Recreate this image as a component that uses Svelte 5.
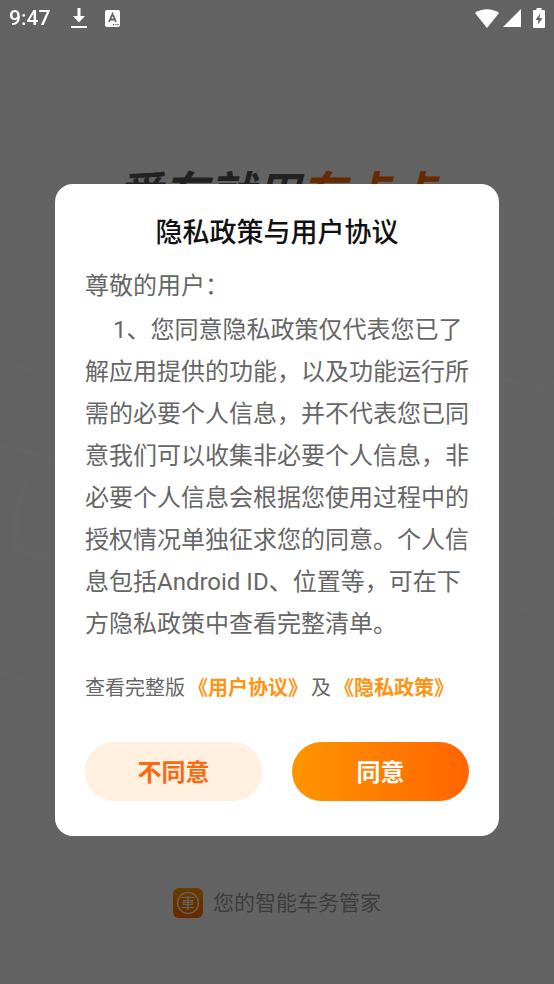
<script>
    // Splash screen with the privacy consent dialog on top of it.

    let answer = $state(null);

    const slogan = { lead: '爱车就用', brand: '车卡卡' };

    const greeting = '尊敬的用户：';
    const terms =
        '1、您同意隐私政策仅代表您已了解应用提供的功能，以及功能运行所需的必要个人信息，' +
        '并不代表您已同意我们可以收集非必要个人信息，非必要个人信息会根据您使用过程中的' +
        '授权情况单独征求您的同意。个人信息包括Android ID、位置等，可在下方隐私政策中查看完整清单。';
</script>

<div class="splash">
    <!-- faint street lines -->
    <svg class="streets" viewBox="0 0 554 984" preserveAspectRatio="none" aria-hidden="true">
        <path d="M0 362L60 377M0 445L60 460M0 672L60 690" />
        <path d="M30 466L16 515L15 548L60 563" stroke-width="4" />
        <path d="M494 415L554 382M494 376L538 388M494 478L554 514M494 530L525 515M494 596L554 622" />
    </svg>

    <h1 class="slogan">{slogan.lead}<span>{slogan.brand}</span></h1>

    <div class="footer">
        <svg class="logo" viewBox="0 0 30 30" aria-hidden="true">
            <defs>
                <linearGradient id="logo-fill" x1="0" y1="0" x2="0" y2="1">
                    <stop offset="0" stop-color="#ff9800" />
                    <stop offset="1" stop-color="#ff6a00" />
                </linearGradient>
            </defs>
            <rect width="30" height="30" rx="6" fill="url(#logo-fill)" />
            <circle cx="15" cy="15" r="10.5" fill="none" stroke="#fff" stroke-width="1.2" />
            <text x="15" y="20" text-anchor="middle">車</text>
        </svg>
        <span>您的智能车务管家</span>
    </div>
</div>

<div class="mask">
    <div class="status-bar">
        <span class="time">9:47</span>
        <svg width="16" height="20" viewBox="0 0 16 20" aria-hidden="true">
            <path d="M6.5 0h3v8H14l-6 6.500L2 8h4.500zM0 18h16v2H0z" fill="#fff" />
        </svg>
        <svg class="lang" width="15" height="17" viewBox="0 0 15 17" aria-hidden="true">
            <rect width="15" height="17" rx="2" fill="#fff" />
            <path d="M4 12L7.500 4L11 12M5.200 9.500h4.600" fill="none" stroke="#636363" stroke-width="1.800" />
            <path d="M8 14h1.300v1.300H8zM10.300 14h1.300v1.300h-1.300zM12.500 14h1.300v1.300h-1.300z" fill="#636363" />
        </svg>
        <svg class="wifi" width="24" height="19" viewBox="0 0 24 19" aria-hidden="true">
            <path d="M0 4C7-1 17-1 24 4L12 19z" fill="#fff" />
        </svg>
        <svg width="18" height="18" viewBox="0 0 18 18" aria-hidden="true">
            <path d="M18 0v18H0z" fill="#fff" />
        </svg>
        <svg class="battery" width="12" height="20" viewBox="0 0 12 20" aria-hidden="true">
            <path d="M3.500 0h5v2H11q1 0 1 1v16q0 1-1 1H1q-1 0-1-1V3q0-1 1-1h2.500z" fill="#fff" />
            <path d="M7.500 5L2.500 12H5.500L4.500 17L9.500 10H6.500z" fill="#636363" />
        </svg>
    </div>

    {#if answer === null}
        <div class="dialog" role="dialog" aria-modal="true" aria-labelledby="dialog-title">
            <h2 id="dialog-title">隐私政策与用户协议</h2>
            <div class="content">
                <p>{greeting}</p>
                <p class="terms">{terms}</p>
            </div>
            <p class="links">查看完整版<a href="#agreement">《用户协议》</a>及<a href="#privacy">《隐私政策》</a></p>
            <div class="actions">
                <button class="refuse" onclick={() => (answer = 'no')}>不同意</button>
                <button class="agree" onclick={() => (answer = 'yes')}>同意</button>
            </div>
        </div>
    {/if}
</div>

<style>
    :global(body) {
        margin: 0;
        background: #f8f8f8;
        font-family: Roboto, "Noto Sans CJK SC", sans-serif;
    }

    h1,
    h2,
    p {
        margin: 0;
    }

    .splash {
        position: relative;
        box-sizing: border-box;
        min-height: 100vh;
        padding: 168px 20px 66px;
        display: flex;
        flex-direction: column;
        align-items: center;
        justify-content: space-between;
    }

    .streets {
        position: absolute;
        inset: 0;
        width: 100%;
        height: 100%;
        fill: none;
        stroke: #f8fbfa;
        stroke-width: 3;
    }

    .slogan {
        color: #555;
        font-size: 46px;
        font-style: italic;
        font-weight: 700;
        line-height: 52px;
    }

    .slogan span {
        color: #ff6a00;
    }

    .footer {
        display: flex;
        align-items: center;
        gap: 10px;
        color: #999;
        font-size: 21px;
        line-height: 30px;
    }

    .logo {
        width: 30px;
        height: 30px;
    }

    .logo text {
        fill: #fff;
        font-size: 14px;
    }

    .mask {
        position: fixed;
        inset: 0;
        display: flex;
        flex-direction: column;
        overflow-y: auto;
        background: rgba(0, 0, 0, 0.6);
    }

    .status-bar {
        display: flex;
        align-items: center;
        flex-shrink: 0;
        height: 36px;
        padding: 0 9px;
    }

    .time {
        margin-right: 21px;
        color: #fff;
        font-size: 21px;
        font-weight: 500;
    }

    .lang {
        margin-left: 18px;
    }

    .wifi {
        margin-left: auto;
        margin-right: 4px;
    }

    .battery {
        margin-left: 12px;
    }

    .dialog {
        margin: auto 55px;
        padding: 31px 30px 35px;
        border-radius: 18px;
        background: #fff;
    }

    h2 {
        color: #111;
        font-size: 27px;
        font-weight: 500;
        line-height: 36px;
        text-align: center;
    }

    .content {
        margin-top: 14px;
        color: #666;
        font-size: 24px;
        line-height: 42px;
    }

    .terms {
        margin-top: 2px;
        text-indent: 28px;
    }

    .links {
        margin-top: 28px;
        color: #666;
        font-size: 20px;
        line-height: 30px;
    }

    .links a {
        margin: 0 3px;
        color: #ff9412;
        font-weight: 700;
        text-decoration: none;
    }

    .actions {
        display: flex;
        gap: 30px;
        margin-top: 39px;
    }

    button {
        flex: 1;
        height: 59px;
        padding: 0 0 2px;
        border: none;
        border-radius: 30px;
        font-family: inherit;
        font-size: 24px;
        font-weight: 700;
        cursor: pointer;
    }

    .refuse {
        background: #fff0e0;
        color: #f96a0e;
    }

    .agree {
        background: linear-gradient(90deg, #ff9500, #ff6400);
        color: #fff;
    }
</style>
